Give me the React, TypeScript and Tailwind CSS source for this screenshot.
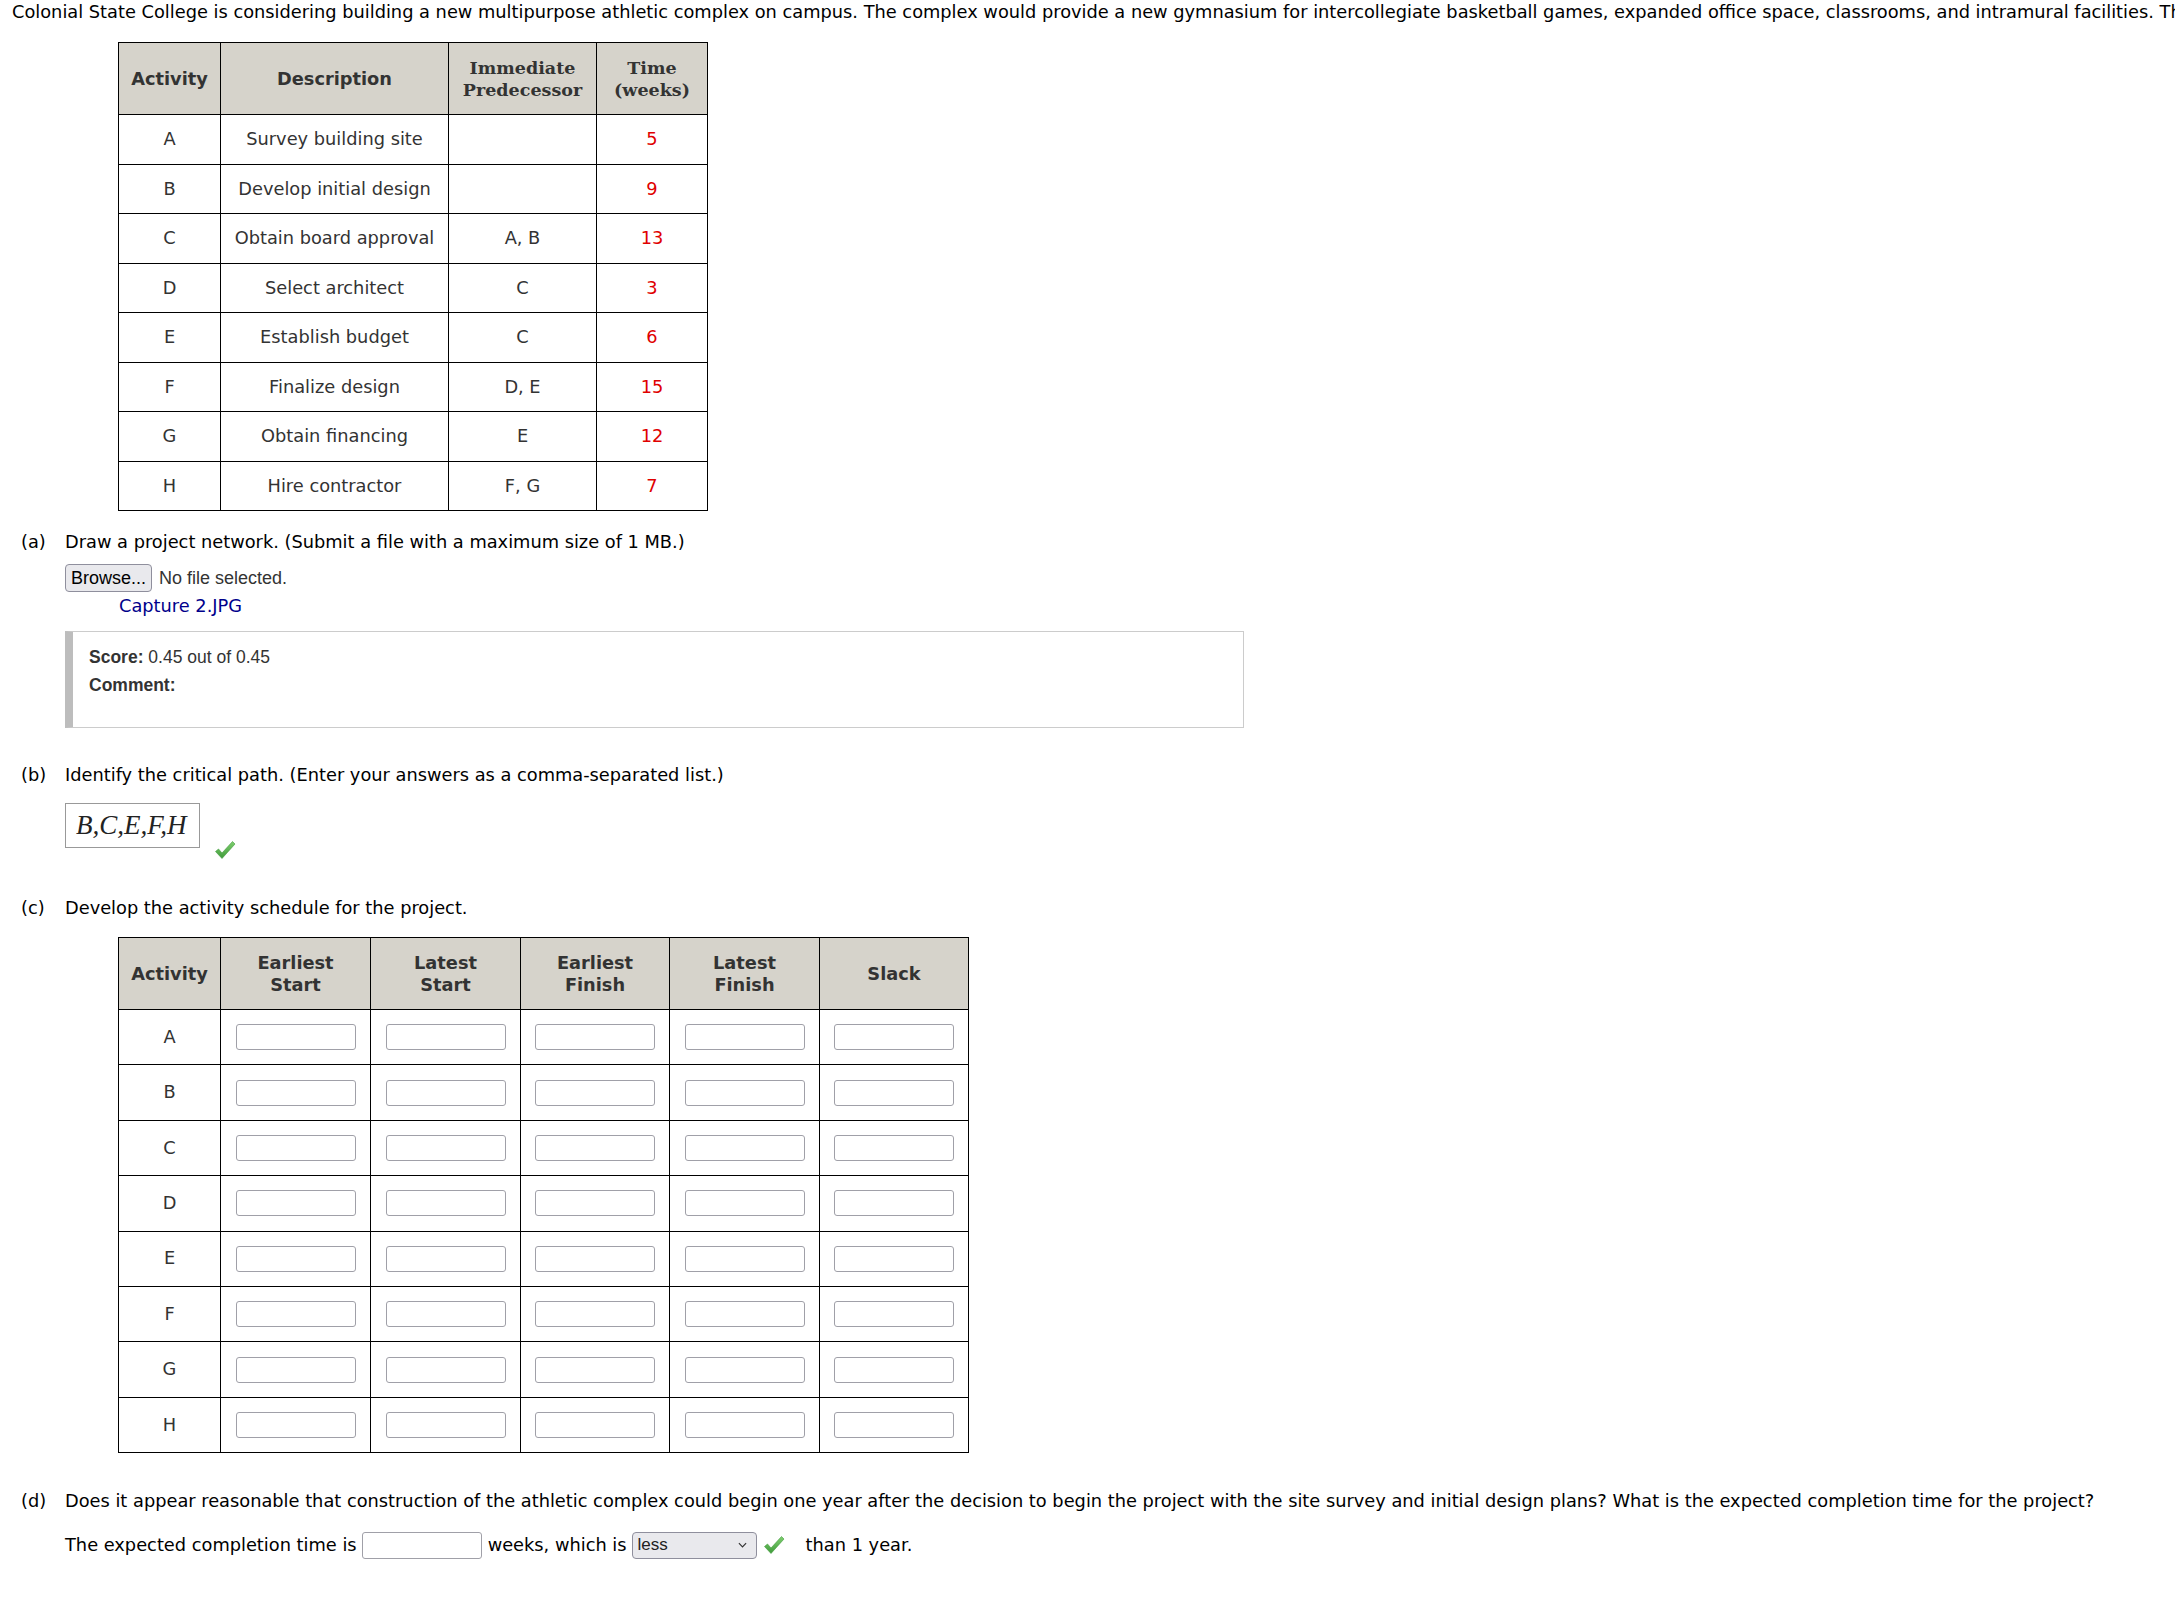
import React from "react";

const tasks = [
  { id: "A", desc: "Survey building site", pred: "", time: 5 },
  { id: "B", desc: "Develop initial design", pred: "", time: 9 },
  { id: "C", desc: "Obtain board approval", pred: "A, B", time: 13 },
  { id: "D", desc: "Select architect", pred: "C", time: 3 },
  { id: "E", desc: "Establish budget", pred: "C", time: 6 },
  { id: "F", desc: "Finalize design", pred: "D, E", time: 15 },
  { id: "G", desc: "Obtain financing", pred: "E", time: 12 },
  { id: "H", desc: "Hire contractor", pred: "F, G", time: 7 },
];

// column widths picked to line up with the reference grid
const scheduleCols = [
  { label: ["Earliest", "Start"], w: "w-[150px]" },
  { label: ["Latest", "Start"], w: "w-[150px]" },
  { label: ["Earliest", "Finish"], w: "w-[149px]" },
  { label: ["Latest", "Finish"], w: "w-[150px]" },
  { label: ["Slack"], w: "w-[149px]" },
];

function Check({ className = "" }: { className?: string }) {
  return (
    <svg viewBox="0 0 22 20" className={`w-[22px] h-[20px] shrink-0 ${className}`}>
      <defs>
        <linearGradient id="chk" x1="0" y1="0" x2="0" y2="1">
          <stop offset="0" stopColor="#7fcf6f" />
          <stop offset="1" stopColor="#3f9a3a" />
        </linearGradient>
      </defs>
      <path
        d="M1.5 11.5 L4.5 9 L8 13 L18.5 1.5 L21 4 L8 18.5 Z"
        fill="url(#chk)"
        stroke="#3f9a3a"
        strokeWidth="0.6"
        strokeLinejoin="round"
      />
    </svg>
  );
}

function TextBox({ className = "" }: { className?: string }) {
  return (
    <div
      className={`h-[26px] w-[120px] shrink-0 bg-white border border-[#a0a0a8] rounded-[3px] ${className}`}
    />
  );
}

export default function App() {
  return (
    <div className="min-h-[1601px] overflow-hidden bg-white text-black text-[17.8px] font-['DejaVu_Sans',Verdana,sans-serif]">
      <p className="pl-[12px] whitespace-nowrap overflow-hidden leading-[24px] h-[24px]">
        Colonial State College is considering building a new multipurpose athletic complex on campus. The complex would
        provide a new gymnasium for intercollegiate basketball games, expanded office space, classrooms, and intramural
        facilities. The college
      </p>

      <table className="ml-[118px] mt-[18px] border-collapse text-[#333]">
        <thead>
          <tr className="h-[72px] bg-[#d6d3cb] leading-[22px]">
            <th className="w-[102px] border border-black font-bold">Activity</th>
            <th className="w-[228px] border border-black font-bold">Description</th>
            <th className="w-[148px] border border-black font-bold font-['DejaVu_Serif',Georgia,serif] text-[17.5px]">
              Immediate
              <br />
              Predecessor
            </th>
            <th className="w-[111px] border border-black font-bold font-['DejaVu_Serif',Georgia,serif] text-[17.5px]">
              Time
              <br />
              (weeks)
            </th>
          </tr>
        </thead>
        <tbody>
          {tasks.map((t) => (
            <tr key={t.id} className="h-[49.5px] text-center">
              <td className="border border-black pt-[1px]">{t.id}</td>
              <td className="border border-black pt-[1px]">{t.desc}</td>
              <td className="border border-black pt-[1px]">{t.pred}</td>
              <td className="border border-black pt-[1px] text-[#e00000]">{t.time}</td>
            </tr>
          ))}
        </tbody>
      </table>

      {/* (a) */}
      <div className="flex pl-[21px] mt-[19px] leading-[24px]">
        <span className="w-[44px]">(a)</span>
        <span>Draw a project network. (Submit a file with a maximum size of 1 MB.)</span>
      </div>
      <div className="ml-[65px] mt-[10px] flex items-center gap-[7px] font-['Liberation_Sans',Arial,sans-serif] text-[18px]">
        <button className="h-[28px] px-[5px] bg-[#e9e9ed] border border-[#8f8f9d] rounded-[4px] text-black leading-none">
          Browse...
        </button>
        <span className="text-[#333]">No file selected.</span>
      </div>
      <div className="ml-[119px] mt-[2px] leading-[24px] text-[#00008b]">Capture 2.JPG</div>
      <div className="ml-[65px] mt-[13px] w-[1179px] h-[97px] border border-[#cccccc] border-l-[8px] border-l-[#bdbdbd] pl-[16px] pt-[15px] font-['Liberation_Sans',Arial,sans-serif] text-[17.5px] text-[#333] leading-[20px]">
        <div>
          <span className="font-bold">Score:</span> 0.45 out of 0.45
        </div>
        <div className="mt-[8px] font-bold">Comment:</div>
      </div>

      {/* (b) */}
      <div className="flex pl-[21px] mt-[35px] leading-[24px]">
        <span className="w-[44px]">(b)</span>
        <span>Identify the critical path. (Enter your answers as a comma-separated list.)</span>
      </div>
      <div className="ml-[65px] mt-[16px] flex items-start gap-[14px]">
        <div className="h-[45px] w-[135px] border border-[#999] flex items-center pl-[10px] font-['Liberation_Serif','Times_New_Roman',serif] italic text-[27px] text-[#222]">
          B,C,E,F,H
        </div>
        <Check className="mt-[37px]" />
      </div>

      {/* (c) */}
      <div className="flex pl-[21px] mt-[36px] leading-[24px]">
        <span className="w-[44px]">(c)</span>
        <span>Develop the activity schedule for the project.</span>
      </div>
      <table className="ml-[118px] mt-[17px] border-collapse text-[#333]">
        <thead>
          <tr className="h-[72px] bg-[#d6d3cb] leading-[22px]">
            <th className="w-[102px] border border-black font-bold">Activity</th>
            {scheduleCols.map((c, i) => (
              <th key={i} className={`${c.w} border border-black font-bold`}>
                {c.label.map((w, j) => (
                  <div key={j}>{w}</div>
                ))}
              </th>
            ))}
          </tr>
        </thead>
        <tbody>
          {tasks.map((t) => (
            <tr key={t.id} className="h-[55.4px] text-center">
              <td className="border border-black">{t.id}</td>
              {scheduleCols.map((_, i) => (
                <td key={i} className="border border-black">
                  <TextBox className="mx-auto" />
                </td>
              ))}
            </tr>
          ))}
        </tbody>
      </table>

      {/* (d) */}
      <div className="flex pl-[21px] mt-[36px] leading-[24px] whitespace-nowrap">
        <span className="w-[44px]">(d)</span>
        <span>
          Does it appear reasonable that construction of the athletic complex could begin one year after the decision to
          begin the project with the site survey and initial design plans? What is the expected completion time for the
          project?
        </span>
      </div>
      <div className="ml-[65px] mt-[17px] flex items-center h-[30px] whitespace-nowrap">
        <span>The expected completion time is</span>
        <TextBox className="ml-[5px] h-[27px]" />
        <span className="ml-[6px]">weeks, which is</span>
        <div className="ml-[5px] h-[27px] w-[125px] shrink-0 bg-[#e9e9ed] border border-[#8f8f9d] rounded-[4px] flex items-center justify-between pl-[5px] pr-[9px] font-['Liberation_Sans',Arial,sans-serif] text-[17px] text-[#222]">
          <span>less</span>
          <svg viewBox="0 0 10 6" className="w-[9px] h-[6px]">
            <path d="M1 1 L5 5 L9 1" fill="none" stroke="#333" strokeWidth="1.3" />
          </svg>
        </div>
        <Check className="ml-[6px]" />
        <span className="ml-[21px]">than 1 year.</span>
      </div>
    </div>
  );
}
